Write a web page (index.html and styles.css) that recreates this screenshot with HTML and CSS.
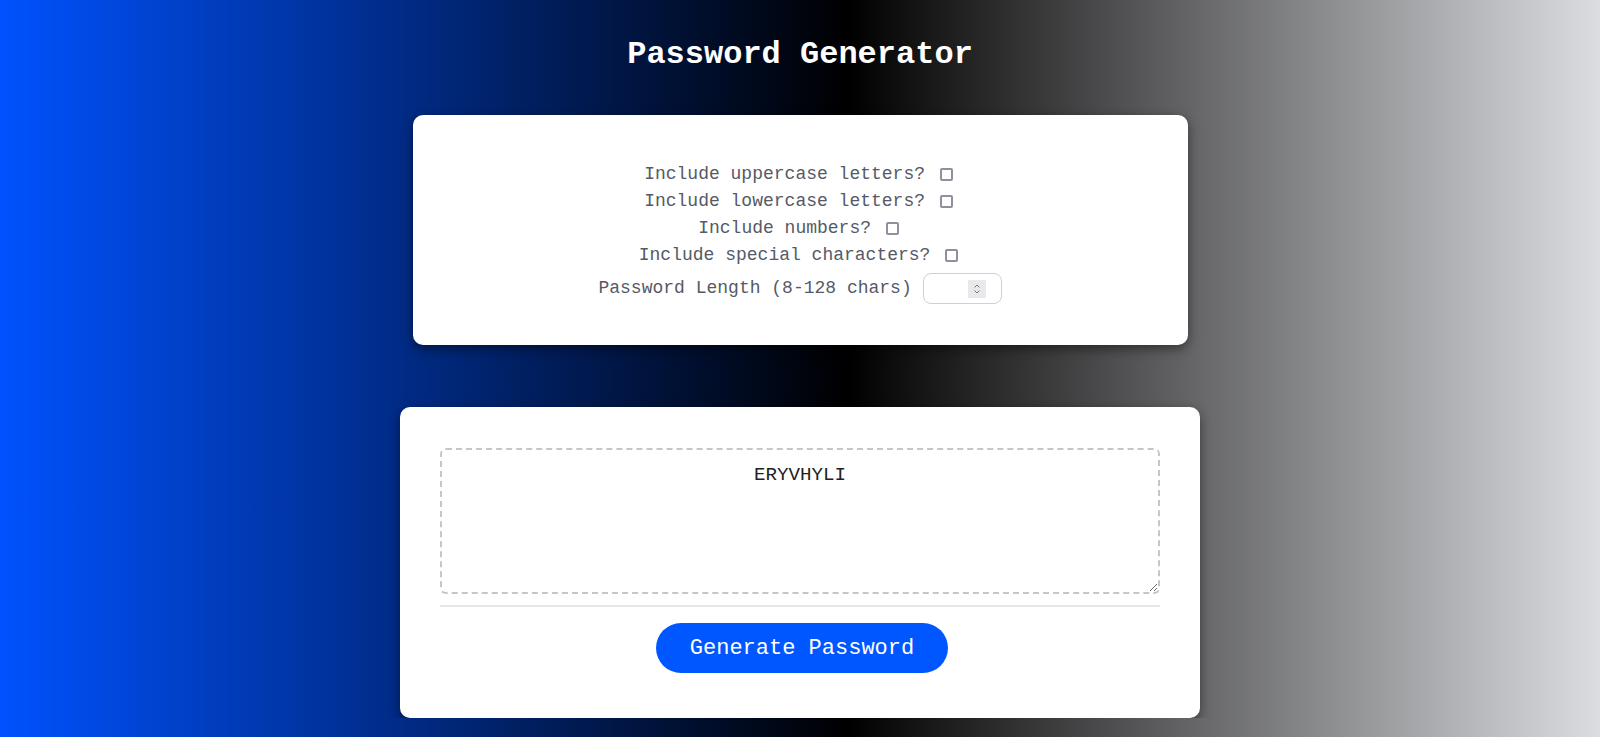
FILE: index.html
```html
<!DOCTYPE html>
<html lang="en">
<head>
<meta charset="utf-8">
<title>Password Generator</title>
<link rel="stylesheet" href="styles.css">
</head>
<body>
  <main class="wrapper">
    <h1 class="title">Password Generator</h1>

    <section class="card options">
      <div class="row"><label for="upper">Include uppercase letters?</label> <input type="checkbox" id="upper" class="check"></div>
      <div class="row"><label for="lower">Include lowercase letters?</label> <input type="checkbox" id="lower" class="check"></div>
      <div class="row"><label for="nums">Include numbers?</label> <input type="checkbox" id="nums" class="check"></div>
      <div class="row"><label for="special">Include special characters?</label> <input type="checkbox" id="special" class="check"></div>
      <div class="row row-length"><label for="len">Password Length (8-128 chars)</label> <input type="number" id="len" class="length" min="8" max="128"></div>
    </section>

    <section class="card output">
      <textarea class="password" readonly>ERYVHYLI</textarea>
      <div class="footer">
        <button class="btn" type="button">Generate Password</button>
      </div>
    </section>
  </main>
</body>
</html>
```

FILE: styles.css
```css
html {
  min-height: 100%;
}

body {
  margin: 0;
  font-family: "Courier New", "Liberation Mono", monospace;
  background: linear-gradient(to right, #0052ff 0%, #000 53%, #dcdde1 100%);
}

.wrapper {
  display: flex;
  flex-direction: column;
  align-items: center;
}

.title {
  margin: 36px 0 0;
  color: #fff;
  font-size: 32px;
  font-weight: bold;
  line-height: normal;
  text-align: center;
}

.card {
  background: #fff;
  border-radius: 10px;
  box-shadow: 0 4px 12px rgba(0, 0, 0, 0.45);
  box-sizing: border-box;
}

.options {
  width: 775px;
  margin-top: 42px;
  padding: 46px 0 41px;
  text-align: center;
  color: #555a66;
  font-size: 18px;
}

.row {
  line-height: 27px;
  height: 27px;
}

.check {
  -webkit-appearance: none;
  appearance: none;
  box-sizing: border-box;
  vertical-align: middle;
  width: 13px;
  height: 13px;
  margin: 3px 3px 3px 4px;
  border: 2px solid #8f8f9d;
  border-radius: 2px;
  background: #fff;
}

.row-length {
  height: 31px;
  line-height: 31px;
  margin-top: 4px;
}

.length {
  box-sizing: border-box;
  width: 79px;
  height: 31px;
  margin: 0;
  padding: 0 15px 0 8px;
  border: 1px solid #cfcfd4;
  border-radius: 8px;
  vertical-align: middle;
  font-family: inherit;
  font-size: 16px;
}

.length::-webkit-inner-spin-button {
  -webkit-appearance: none;
  appearance: none;
  opacity: 1;
  width: 18px;
  height: 18px;
  margin: 0;
  background: #e9e9ed url("data:image/svg+xml,%3Csvg xmlns='http://www.w3.org/2000/svg' width='18' height='18' viewBox='0 0 18 18'%3E%3Cpath d='M6.5 7.5 9 5l2.5 2.5M6.5 10.5 9 13l2.5-2.5' fill='none' stroke='%23777' stroke-width='1'/%3E%3C/svg%3E") center / 18px 18px no-repeat;
}

.output {
  width: 800px;
  margin-top: 62px;
  padding: 41px 40px 45px;
}

.password {
  display: block;
  box-sizing: border-box;
  width: 720px;
  height: 146px;
  margin: 0 0 11px;
  padding: 14px;
  border: 2px dashed #c3c6cd;
  border-radius: 6px;
  font-family: inherit;
  font-size: 19.2px;
  color: #222;
  text-align: center;
  outline: none;
}

.footer {
  border-top: 2px solid #e6e6e6;
  padding: 16px 0 0 4px;
  display: flex;
  justify-content: center;
}

.btn {
  height: 50px;
  padding: 0 34px;
  border: none;
  border-radius: 25px;
  background: #0057ff;
  color: #fff;
  font-family: inherit;
  font-size: 22px;
  cursor: pointer;
}
```
